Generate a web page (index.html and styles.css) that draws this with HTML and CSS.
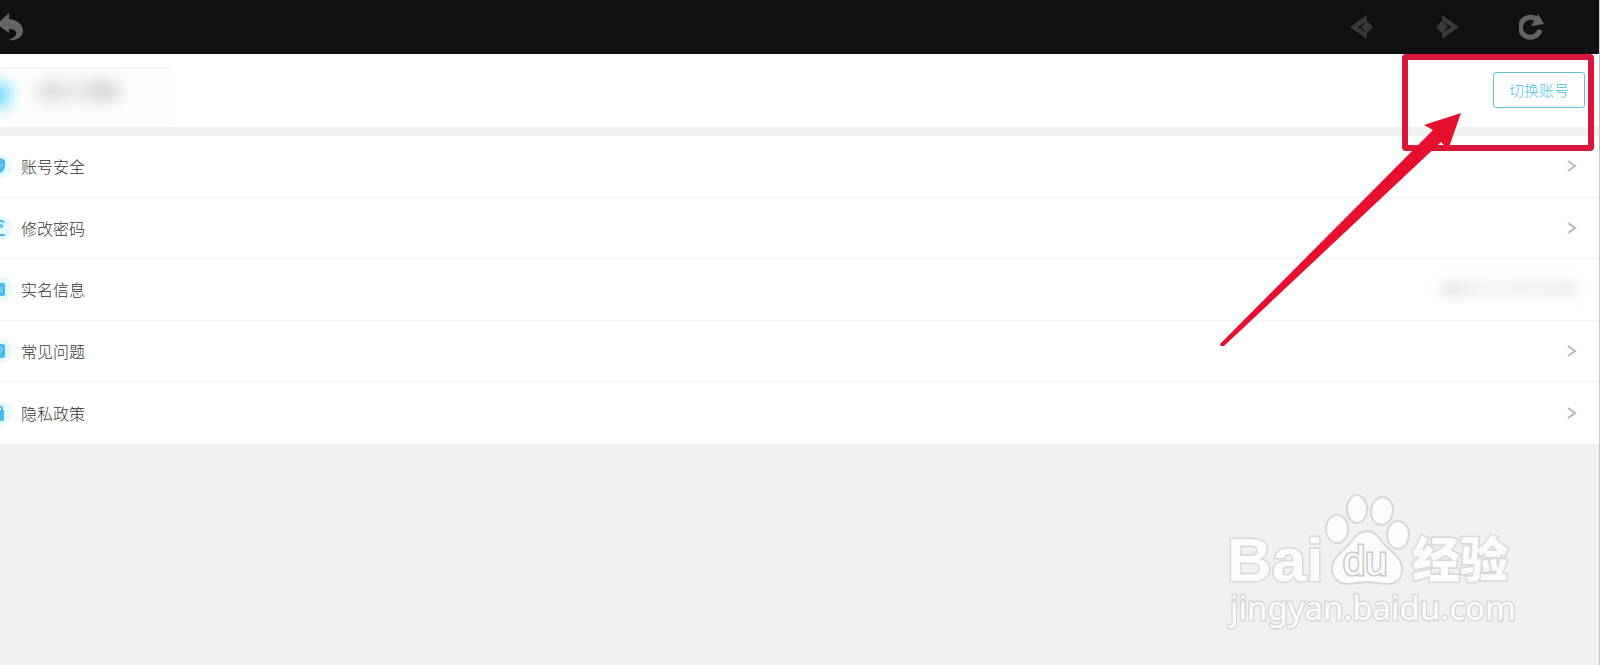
FILE: index.html
```html
<!DOCTYPE html>
<html lang="zh-CN">

<head>
  <meta charset="UTF-8" />
  <title>账号</title>
  <link rel="stylesheet" href="styles.css">
</head>

<body>
  <!-- 顶部工具栏 -->
  <header class="toolbar">
    <button class="back" type="button" aria-label="返回">
      <svg width="24" height="28" viewBox="0 0 24 28"><path d="M-2 10L9 0V6C18 7 23 12 23 18C23 24 17 28 8 27C14 25 17 22 16 19C15 17 13 16 9 16V20L-2 12Z" /></svg>
    </button>
    <div class="tools">
      <button class="dim" type="button" aria-label="后退">
        <svg width="24" height="26" viewBox="0 0 24 26"><path d="M0 13L17 1V7L8 13L17 19V25Z" /><path d="M17 7L23 13L17 19L11 13Z" /></svg>
      </button>
      <button class="dim" type="button" aria-label="前进">
        <svg width="24" height="26" viewBox="0 0 24 26"><path d="M24 13L7 1V7L16 13L7 19V25Z" /><path d="M7 7L13 13L7 19L1 13Z" /></svg>
      </button>
      <button type="button" aria-label="刷新">
        <svg width="26" height="26" viewBox="0 0 26 26"><path d="M17 5A10 10 0 1 0 21 16" class="ring" /><path d="M19 0L25 10L12 12Z" /></svg>
      </button>
    </div>
  </header>

  <!-- 用户信息 -->
  <section class="profile">
    <div class="user">
      <span class="avatar"></span>
      <span class="name"></span>
    </div>
    <button class="switch" type="button">切换账号</button>
  </section>

  <!-- 设置列表 -->
  <nav class="list">
    <a class="row" href="#">
      <svg class="icon" width="24" height="28" viewBox="0 0 24 28"><circle cx="12" cy="14" r="12" /><path d="M12 6L17 8V14C17 17 15 20 12 21C9 20 7 17 7 14V8Z" /><path class="line" d="M9 14L11 16L15 12" /></svg>
      <span class="label">账号安全</span>
      <svg class="arrow" width="10" height="12" viewBox="0 0 10 12"><path d="M1 1L8 6L1 11" /></svg>
    </a>
    <a class="row" href="#">
      <svg class="icon" width="24" height="28" viewBox="0 0 24 28"><circle cx="12" cy="14" r="12" /><path class="pen" d="M7 21H17M9 16L13 10M11 8C13 6 15 7 16 9M13 14L15 11" /></svg>
      <span class="label">修改密码</span>
      <svg class="arrow" width="10" height="12" viewBox="0 0 10 12"><path d="M1 1L8 6L1 11" /></svg>
    </a>
    <a class="row" href="#">
      <svg class="icon" width="24" height="28" viewBox="0 0 24 28"><circle cx="12" cy="14" r="12" /><rect x="7" y="8" width="10" height="13" rx="2" /><path class="line" d="M9 13H15M12 16H15" /></svg>
      <span class="label">实名信息</span>
      <span class="real-name"></span>
    </a>
    <a class="row" href="#">
      <svg class="icon" width="24" height="28" viewBox="0 0 24 28"><circle cx="12" cy="14" r="12" /><rect x="7" y="7" width="10" height="14" rx="2" /><path class="line" d="M10 12C10 10 14 10 14 12C14 14 12 14 12 16" /></svg>
      <span class="label">常见问题</span>
      <svg class="arrow" width="10" height="12" viewBox="0 0 10 12"><path d="M1 1L8 6L1 11" /></svg>
    </a>
    <a class="row" href="#">
      <svg class="icon" width="24" height="28" viewBox="0 0 24 28"><circle cx="12" cy="14" r="12" /><rect x="8" y="11" width="8" height="11" rx="1" /><path class="pen" d="M10 12V9C10 7 14 7 14 9V12" /></svg>
      <span class="label">隐私政策</span>
      <svg class="arrow" width="10" height="12" viewBox="0 0 10 12"><path d="M1 1L8 6L1 11" /></svg>
    </a>
  </nav>

  <!-- 标注: 红框和箭头 -->
  <svg class="callout" width="400" height="306" viewBox="1200 54 400 306">
    <rect x="1406" y="57" width="186" height="91" rx="1" />
    <path d="M1462 113L1425 125L1434 130L1222 343C1220 345 1222 347 1225 346L1442 142L1449 150Z" />
  </svg>

  <!-- 水印 -->
  <svg class="watermark" width="340" height="160" viewBox="0 0 340 160">
    <text class="bai" x="27" y="101">Bai</text>
    <ellipse cx="137" cy="49" rx="11" ry="14" />
    <ellipse cx="157" cy="29" rx="10" ry="14" />
    <ellipse cx="182" cy="31" rx="11" ry="14" transform="rotate(8 182 31)" />
    <ellipse cx="198" cy="55" rx="11" ry="14" />
    <path d="M167 51C174 51 178 56 182 62C187 69 202 76 202 89C202 99 196 104 187 104C179 104 175 102 167 102C159 102 156 104 148 104C138 104 132 98 132 88C132 77 145 70 151 62C155 56 160 51 167 51Z" />
    <text class="du" x="143" y="95">du</text>
    <text class="exp" x="212" y="97">经验</text>
    <text class="url" x="30" y="140">jingyan.baidu.com</text>
  </svg>
</body>

</html>
```
FILE: styles.css
```css
* {
  box-sizing: border-box;
}

body {
  position: relative;
  min-height: 100vh;
  margin: 0;
  border-right: 1px solid #c8c8c8;
  background-color: #f0f0f0;
  font-family: "Noto Sans CJK SC", sans-serif;
  overflow-x: hidden;
}

button {
  padding: 0;
  border: none;
  background: none;
  cursor: pointer;
}

.toolbar {
  display: flex;
  justify-content: space-between;
  align-items: center;
  height: 54px;
  padding-right: 25px;
  background-color: #111113;
}

.toolbar button {
  display: flex;
  justify-content: center;
  fill: #646466;
}

.tools {
  display: flex;
}

.tools button {
  width: 85px;
}

.toolbar .dim {
  fill: #39393b;
}

.ring {
  fill: none;
  stroke: #646466;
  stroke-width: 5;
}

.profile {
  display: flex;
  justify-content: space-between;
  align-items: center;
  height: 73px;
  margin-bottom: 9px;
  padding-right: 14px;
  background-color: #fff;
}

.user {
  display: flex;
  align-items: center;
  width: 170px;
  height: 60px;
  margin-top: 12px;
  border-top: 2px solid #f5f5f5;
  background-color: #fdfdfd;
  overflow: hidden;
}

.avatar {
  width: 28px;
  height: 28px;
  margin: 0 24px 6px -16px;
  border-radius: 14px;
  background-color: #83e0ff;
  filter: blur(7px);
}

.name {
  width: 84px;
  height: 18px;
  margin-bottom: 14px;
  border-radius: 9px;
  background: linear-gradient(90deg, #d8d8d8 30%, #ececec 45%, #cfcfcf 75%);
  filter: blur(8px);
}

.switch {
  height: 36px;
  margin-bottom: 2px;
  padding: 0 15px;
  border: 1px solid #5cc6d4;
  border-radius: 3px;
  color: #45c6de;
  font-family: inherit;
  font-size: 15px;
  font-weight: 300;
}

.list {
  display: grid;
  grid-template-rows: repeat(5, 1fr);
  min-height: 308px;
  background-color: #fff;
}

.row {
  display: flex;
  align-items: center;
  padding-right: 22px;
  border-bottom: 1px solid #f4f4f4;
  color: #333;
  text-decoration: none;
}

.row:last-child {
  border-bottom: none;
}

.icon {
  margin-left: -12px;
  fill: #45bdf0;
}

.icon circle {
  fill: #e5f9fe;
}

.icon .line {
  fill: none;
  stroke: #b8e8fb;
}

.icon .pen {
  fill: none;
  stroke: #45bdf0;
  stroke-width: 2;
}

.label {
  flex: 1;
  margin-left: 9px;
  font-size: 16px;
  font-weight: 300;
}

.arrow {
  fill: none;
  stroke: #b8b8b8;
  stroke-width: 2;
}

.real-name {
  width: 136px;
  height: 18px;
  background: linear-gradient(90deg, #e8e8e8, #f6f6f6 40%, #ededed);
  filter: blur(6px);
}

.callout {
  position: absolute;
  top: 54px;
  right: 0;
  fill: #e60f2d;
  pointer-events: none;
}

.callout rect {
  fill: none;
  stroke: #d7183a;
  stroke-width: 6;
}

.watermark {
  position: absolute;
  right: 59px;
  bottom: 25px;
  fill: #fcfcfc;
  stroke: #d8d8d8;
  stroke-width: 2;
  pointer-events: none;
}

.watermark text {
  paint-order: stroke;
  stroke-width: 3;
}

.watermark .bai {
  font-family: "Liberation Sans", sans-serif;
  font-size: 62px;
  font-weight: bold;
}

.watermark .du {
  stroke: #c8c8c8;
  font-family: "Liberation Sans", sans-serif;
  font-size: 40px;
}

.watermark .exp {
  font-size: 48px;
  font-weight: 900;
}

.watermark .url {
  font-family: "Noto Sans", sans-serif;
  font-size: 33px;
}
```
